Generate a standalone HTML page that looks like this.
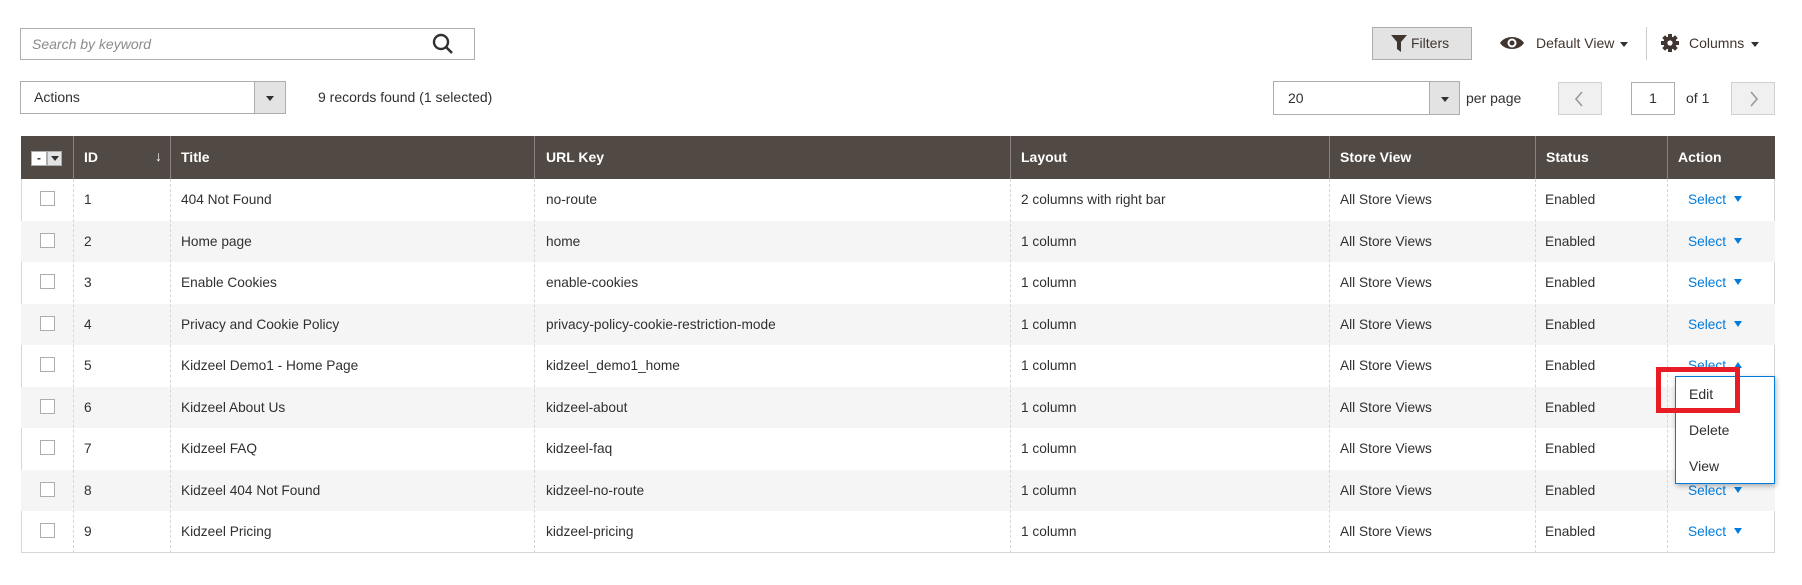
<!DOCTYPE html>
<html><head><meta charset="utf-8">
<style>
*{box-sizing:border-box;margin:0;padding:0}
body{width:1802px;height:585px;background:#fff;font-family:"Liberation Sans",sans-serif;color:#303030;position:relative;overflow:hidden;font-size:14px}
.a{position:absolute}
.box{position:absolute;border:1px solid #adadad;background:#fff}
.btn{position:absolute;background:#e3e3e3;border:1px solid #adadad}
.tri{position:absolute;width:0;height:0;border-left:4px solid transparent;border-right:4px solid transparent;border-top:5px solid #303030}
.row{position:absolute;left:21px;width:1754px;height:41.5px;font-size:13.7px}
.row span{position:absolute;top:0;line-height:41.5px;white-space:nowrap}
.cb{position:absolute;left:19px;top:12px;width:15px;height:15px;border:1px solid #adadad;background:#fff}
.vl{position:absolute;top:179px;height:374px;border-left:1px dashed #d6d6d6}
.hl{position:absolute;top:136px;height:43px;border-left:1px solid #8a837f}
.th{position:absolute;top:136px;line-height:43px;color:#fff;font-weight:bold}
.sel{color:#007bdb}
.sel::after{content:"";display:inline-block;width:0;height:0;margin-left:8px;vertical-align:2px;border-left:4.5px solid transparent;border-right:4.5px solid transparent;border-top:6px solid #007bdb}
.sel.up::after{border-top:none;border-bottom:6px solid #007bdb}
</style></head><body>
<!-- search -->
<div class="box" style="left:20px;top:28px;width:455px;height:32px"></div>
<div class="a" style="left:32px;top:28px;line-height:32px;color:#8a8a8a;font-style:italic">Search by keyword</div>
<svg class="a" style="left:430px;top:32px" width="26" height="26" viewBox="0 0 26 26"><circle cx="11" cy="10" r="7" fill="none" stroke="#303030" stroke-width="2.4"/><line x1="16" y1="15" x2="22" y2="21" stroke="#303030" stroke-width="2.6"/></svg>

<!-- filters etc -->
<div class="btn" style="left:1372px;top:27px;width:100px;height:33px"></div>
<svg class="a" style="left:1391px;top:35px" width="16" height="17" viewBox="0 0 16 17"><path d="M0 0H16L10 7V17L6 14V7Z" fill="#41362f"/></svg>
<div class="a" style="left:1411px;top:27px;line-height:33px;color:#41362f">Filters</div>
<svg class="a" style="left:1499px;top:34px" width="26" height="18" viewBox="0 0 26 18"><path d="M1 9C6 1 20 1 25 9C20 17 6 17 1 9Z" fill="#41362f"/><circle cx="13" cy="9" r="4.5" fill="#fff"/><circle cx="13" cy="9" r="2.5" fill="#41362f"/></svg>
<div class="a" style="left:1536px;top:27px;line-height:33px;color:#41362f">Default View</div>
<div class="tri" style="left:1620px;top:42px"></div>
<div class="a" style="left:1646px;top:27px;width:1px;height:33px;background:#ccc"></div>
<svg class="a" style="left:1661px;top:34px" width="18" height="18" viewBox="0 0 18 18"><g fill="#41362f"><circle cx="9" cy="9" r="6.5"/><rect x="7" y="0" width="4" height="18"/><rect x="0" y="7" width="18" height="4"/><rect x="7" y="0" width="4" height="18" transform="rotate(45 9 9)"/><rect x="7" y="0" width="4" height="18" transform="rotate(-45 9 9)"/></g><circle cx="9" cy="9" r="2.6" fill="#fff"/></svg>
<div class="a" style="left:1689px;top:27px;line-height:33px;color:#41362f">Columns</div>
<div class="tri" style="left:1751px;top:42px"></div>

<!-- actions -->
<div class="box" style="left:20px;top:81px;width:266px;height:33px"></div>
<div class="btn" style="left:254px;top:81px;width:32px;height:33px"></div>
<div class="tri" style="left:266px;top:96px"></div>
<div class="a" style="left:34px;top:81px;line-height:33px">Actions</div>
<div class="a" style="left:318px;top:81px;line-height:33px">9 records found (1 selected)</div>

<!-- per page -->
<div class="box" style="left:1273px;top:81px;width:187px;height:34px"></div>
<div class="btn" style="left:1429px;top:81px;width:31px;height:34px"></div>
<div class="tri" style="left:1441px;top:97px"></div>
<div class="a" style="left:1288px;top:81px;line-height:34px">20</div>
<div class="a" style="left:1466px;top:81px;line-height:34px">per page</div>
<div class="a" style="left:1558px;top:82px;width:44px;height:33px;background:#f0f0f0;border:1px solid #d1d1d1"></div>
<svg class="a" style="left:1574px;top:91px" width="10" height="16"><path d="M8 1L2 8L8 15" fill="none" stroke="#999" stroke-width="1.6"/></svg>
<div class="box" style="left:1631px;top:82px;width:44px;height:33px;text-align:center;line-height:31px">1</div>
<div class="a" style="left:1686px;top:82px;line-height:33px">of 1</div>
<div class="a" style="left:1731px;top:82px;width:44px;height:33px;background:#f0f0f0;border:1px solid #d1d1d1"></div>
<svg class="a" style="left:1749px;top:91px" width="10" height="16"><path d="M2 1L8 8L2 15" fill="none" stroke="#999" stroke-width="1.6"/></svg>

<!-- table -->
<div class="a" style="left:21px;top:136px;width:1754px;height:43px;background:#514943"></div>
<div class="a" style="left:21px;top:179px;width:1754px;height:374px;border:1px solid #d6d6d6;border-top:none"></div>
<div class="row" style="top:179px"><div class="cb"></div><span style="left:63px">1</span><span style="left:160px">404 Not Found</span><span style="left:525px">no-route</span><span style="left:1000px">2 columns with right bar</span><span style="left:1319px">All Store Views</span><span style="left:1524px">Enabled</span><span class="sel" style="left:1667px">Select</span></div>
<div class="row" style="top:220.5px;background:#f5f5f5"><div class="cb"></div><span style="left:63px">2</span><span style="left:160px">Home page</span><span style="left:525px">home</span><span style="left:1000px">1 column</span><span style="left:1319px">All Store Views</span><span style="left:1524px">Enabled</span><span class="sel" style="left:1667px">Select</span></div>
<div class="row" style="top:262px"><div class="cb"></div><span style="left:63px">3</span><span style="left:160px">Enable Cookies</span><span style="left:525px">enable-cookies</span><span style="left:1000px">1 column</span><span style="left:1319px">All Store Views</span><span style="left:1524px">Enabled</span><span class="sel" style="left:1667px">Select</span></div>
<div class="row" style="top:303.5px;background:#f5f5f5"><div class="cb"></div><span style="left:63px">4</span><span style="left:160px">Privacy and Cookie Policy</span><span style="left:525px">privacy-policy-cookie-restriction-mode</span><span style="left:1000px">1 column</span><span style="left:1319px">All Store Views</span><span style="left:1524px">Enabled</span><span class="sel" style="left:1667px">Select</span></div>
<div class="row" style="top:345px"><div class="cb"></div><span style="left:63px">5</span><span style="left:160px">Kidzeel Demo1 - Home Page</span><span style="left:525px">kidzeel_demo1_home</span><span style="left:1000px">1 column</span><span style="left:1319px">All Store Views</span><span style="left:1524px">Enabled</span><span class="sel up" style="left:1667px">Select</span></div>
<div class="row" style="top:386.5px;background:#f5f5f5"><div class="cb"></div><span style="left:63px">6</span><span style="left:160px">Kidzeel About Us</span><span style="left:525px">kidzeel-about</span><span style="left:1000px">1 column</span><span style="left:1319px">All Store Views</span><span style="left:1524px">Enabled</span></div>
<div class="row" style="top:428px"><div class="cb"></div><span style="left:63px">7</span><span style="left:160px">Kidzeel FAQ</span><span style="left:525px">kidzeel-faq</span><span style="left:1000px">1 column</span><span style="left:1319px">All Store Views</span><span style="left:1524px">Enabled</span></div>
<div class="row" style="top:469.5px;background:#f5f5f5"><div class="cb"></div><span style="left:63px">8</span><span style="left:160px">Kidzeel 404 Not Found</span><span style="left:525px">kidzeel-no-route</span><span style="left:1000px">1 column</span><span style="left:1319px">All Store Views</span><span style="left:1524px">Enabled</span><span class="sel" style="left:1667px">Select</span></div>
<div class="row" style="top:511px"><div class="cb"></div><span style="left:63px">9</span><span style="left:160px">Kidzeel Pricing</span><span style="left:525px">kidzeel-pricing</span><span style="left:1000px">1 column</span><span style="left:1319px">All Store Views</span><span style="left:1524px">Enabled</span><span class="sel" style="left:1667px">Select</span></div>

<div class="vl" style="left:73px"></div><div class="vl" style="left:170px"></div><div class="vl" style="left:534px"></div><div class="vl" style="left:1010px"></div><div class="vl" style="left:1329px"></div><div class="vl" style="left:1535px"></div><div class="vl" style="left:1667px"></div>
<div class="hl" style="left:73px"></div><div class="hl" style="left:170px"></div><div class="hl" style="left:534px"></div><div class="hl" style="left:1010px"></div><div class="hl" style="left:1329px"></div><div class="hl" style="left:1535px"></div><div class="hl" style="left:1667px"></div>

<div class="a" style="left:31px;top:151px;width:16px;height:15px;background:#fff;border:1px solid #adadad;font-size:12px;font-weight:bold;text-align:center;line-height:12px">-</div>
<div class="a" style="left:47px;top:151px;width:15px;height:15px;background:#e3e3e3;border:1px solid #adadad"></div>
<div class="tri" style="left:51px;top:156px"></div>
<div class="th" style="left:84px">ID</div>
<div class="a" style="left:155px;top:148px;color:#fff;font-size:14px">↓</div>
<div class="th" style="left:181px">Title</div>
<div class="th" style="left:546px">URL Key</div>
<div class="th" style="left:1021px">Layout</div>
<div class="th" style="left:1340px">Store View</div>
<div class="th" style="left:1546px">Status</div>
<div class="th" style="left:1678px">Action</div>

<!-- dropdown -->
<div class="a" style="left:1675px;top:376px;width:100px;height:108px;background:#fff;border:1px solid #007bdb;box-shadow:1px 2px 5px rgba(0,0,0,.3)"></div>
<div class="a" style="left:1689px;top:380px;line-height:28px">Edit</div>
<div class="a" style="left:1689px;top:416px;line-height:28px">Delete</div>
<div class="a" style="left:1689px;top:452px;line-height:28px">View</div>
<div class="a" style="left:1656px;top:367px;width:84px;height:46px;border:5px solid #e71c24"></div>
</body></html>
